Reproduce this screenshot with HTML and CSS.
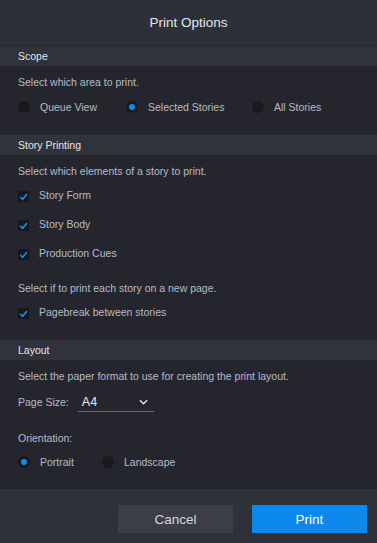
FILE: index.html
```html
<!DOCTYPE html>
<html lang="en">
<head>
  <meta charset="UTF-8">
  <title>Print Options</title>
  <meta name="viewport" content="width=device-width, initial-scale=1.0">
  <link rel="stylesheet" href="styles.css">
</head>
<body>
  <div class="dialog">
    <div class="dialog-title">Print Options</div>

    <div class="section-head">Scope</div>
    <div class="section-body scope-body">
      <p class="hint">Select which area to print.</p>
      <div class="radio-row">
        <label class="opt opt-queue"><span class="radio"></span>Queue View</label>
        <label class="opt opt-selected"><span class="radio on"></span>Selected Stories</label>
        <label class="opt"><span class="radio"></span>All Stories</label>
      </div>
    </div>

    <div class="section-head">Story Printing</div>
    <div class="section-body story-body">
      <p class="hint">Select which elements of a story to print.</p>
      <div class="check-list">
        <label class="opt"><span class="check"><svg viewBox="0 0 12 12"><path d="M2.5 6.5 L5 9 L9.8 3.2"/></svg></span>Story Form</label>
        <label class="opt"><span class="check"><svg viewBox="0 0 12 12"><path d="M2.5 6.5 L5 9 L9.8 3.2"/></svg></span>Story Body</label>
        <label class="opt"><span class="check"><svg viewBox="0 0 12 12"><path d="M2.5 6.5 L5 9 L9.8 3.2"/></svg></span>Production Cues</label>
      </div>
      <p class="hint hint-gap">Select if to print each story on a new page.</p>
      <div class="check-list">
        <label class="opt"><span class="check"><svg viewBox="0 0 12 12"><path d="M2.5 6.5 L5 9 L9.8 3.2"/></svg></span>Pagebreak between stories</label>
      </div>
    </div>

    <div class="section-head">Layout</div>
    <div class="section-body layout-body">
      <p class="hint">Select the paper format to use for creating the print layout.</p>
      <div class="size-row">
        <span class="field-label">Page Size:</span>
        <div class="select">
          <span>A4</span>
          <svg viewBox="0 0 10 6"><path d="M1 1 L5 5 L9 1"/></svg>
        </div>
      </div>
      <p class="field-label orient-label">Orientation:</p>
      <div class="radio-row orient-row">
        <label class="opt opt-portrait"><span class="radio on"></span>Portrait</label>
        <label class="opt"><span class="radio"></span>Landscape</label>
      </div>
    </div>

    <div class="dialog-footer">
      <button class="btn btn-cancel">Cancel</button>
      <button class="btn btn-print">Print</button>
    </div>
  </div>
</body>
</html>
```

FILE: styles.css
```css
body {
  margin: 0;
  padding: 0;
  background: #25262d;
  font-family: 'Liberation Sans', Arial, sans-serif;
  color: #b6bac6;
}

.dialog {
  width: 377px;
  height: 543px;
  display: flex;
  flex-direction: column;
  background: #25262d;
}

.dialog-title {
  height: 45px;
  display: flex;
  align-items: center;
  justify-content: center;
  background: #2e3038;
  border-bottom: 1px solid #292b32;
  color: #e4e6ec;
  font-size: 13.5px;
}

.section-head {
  height: 20px;
  line-height: 20px;
  padding-left: 18px;
  background: #30333b;
  color: #e2e4ea;
  font-size: 10.5px;
}

.section-body {
  padding: 0 18px;
  font-size: 10.5px;
}

.scope-body {
  height: 69px;
}

.story-body {
  height: 185px;
}

.layout-body {
  height: 129px;
}

.hint {
  margin: 0;
  padding-top: 9px;
  height: 14px;
  line-height: 14px;
}

.hint-gap {
  padding-top: 18px;
}

.radio-row {
  display: flex;
  align-items: center;
  height: 20px;
  margin-top: 8px;
}

.orient-row {
  margin-top: 7px;
}

.opt {
  display: flex;
  align-items: center;
  line-height: 14px;
}

.opt-queue {
  width: 108px;
}

.opt-selected {
  width: 126px;
}

.opt-portrait {
  width: 84px;
}

.radio {
  width: 12px;
  height: 12px;
  border-radius: 50%;
  background: #18191d;
  margin-right: 10px;
  display: flex;
  align-items: center;
  justify-content: center;
}

.radio.on::after {
  content: "";
  width: 6px;
  height: 6px;
  border-radius: 50%;
  background: #0d8df0;
}

.check-list {
  display: flex;
  flex-direction: column;
  gap: 9px;
  margin-top: 7px;
}

.check-list .opt {
  height: 20px;
}

.check {
  width: 11px;
  height: 11px;
  background: #18191d;
  margin-right: 10px;
  margin-top: 2px;
  display: flex;
}

.check svg {
  width: 11px;
  height: 11px;
  fill: none;
  stroke: #1592f2;
  stroke-width: 1.7;
}

.size-row {
  display: flex;
  align-items: center;
  margin-top: 9px;
  height: 20px;
}

.field-label {
  color: #b6bac6;
}

.select {
  margin-left: 9px;
  width: 76px;
  height: 20px;
  border-bottom: 1px solid #63666f;
  display: flex;
  align-items: center;
  justify-content: space-between;
  padding: 0 4px;
  box-sizing: border-box;
  color: #eceef2;
  font-size: 12.5px;
}

.select svg {
  width: 9px;
  height: 6px;
  fill: none;
  stroke: #e2e4ea;
  stroke-width: 1.5;
  margin-right: 2px;
}

.orient-label {
  margin: 0;
  padding-top: 19px;
  height: 14px;
  line-height: 14px;
}

.dialog-footer {
  flex: 1;
  background: #2f3139;
  display: flex;
  justify-content: flex-end;
  align-items: flex-start;
  gap: 19px;
  padding: 16px 10px 0 0;
}

.btn {
  width: 115px;
  height: 28px;
  border: none;
  font-family: 'Liberation Sans', Arial, sans-serif;
  font-size: 13.5px;
  cursor: pointer;
}

.btn-cancel {
  background: #3b3e46;
  color: #d6d8de;
}

.btn-print {
  background: #0c87eb;
  color: #ffffff;
}
```
